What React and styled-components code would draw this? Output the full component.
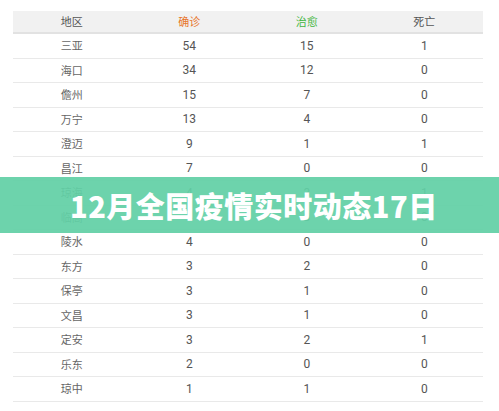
import React from "react";
import styled, { createGlobalStyle } from "styled-components";

const Global = createGlobalStyle`
  html, body { margin: 0; padding: 0; background: #fff; }
  body { font-family: "Noto Sans CJK SC", "Noto Sans", sans-serif; }
`;

const Page = styled.div`
  position: relative;
  width: 499px;
  height: 411px;
  overflow: hidden;
  padding: 11px 16px 0 13px;
  box-sizing: border-box;
`;

const Table = styled.div`
  width: 470px;
  display: flex;
  flex-direction: column;
`;

const HeadRow = styled.div`
  display: grid;
  grid-template-columns: repeat(4, 1fr);
  height: 21px;
  align-items: center;
  background: #f1f1f1;
  border-bottom: 2px solid #e2e2e2;
`;

const HeadCell = styled.div`
  text-align: center;
  font-size: 11px;
  color: ${(p) => p.$color || "#555"};
  line-height: 1;
`;

const Row = styled.div`
  display: grid;
  grid-template-columns: repeat(4, 1fr);
  height: 24.5px;
  align-items: center;
  border-bottom: 1px solid #e9e9e9;
  box-sizing: border-box;
`;

const NameCell = styled.div`
  text-align: center;
  font-size: 11px;
  color: #666;
  line-height: 1;
`;

const NumCell = styled.div`
  text-align: center;
  font-family: "Roboto", "Liberation Sans", sans-serif;
  font-size: 12px;
  color: #555;
  line-height: 1;
`;

const Banner = styled.div`
  position: absolute;
  left: 0;
  right: 0;
  top: 177px;
  height: 56px;
  background: rgba(98, 208, 166, 0.93);
  display: flex;
  align-items: center;
  padding-left: 70px;
  box-sizing: border-box;
`;

const Title = styled.h1`
  margin: 0;
  color: #fff;
  font-family: "Noto Sans CJK SC", sans-serif;
  font-weight: 900;
  font-size: 29px;
  letter-spacing: 0.5px;
  line-height: 1;
`;

const rows = [
  ["三亚", 54, 15, 1],
  ["海口", 34, 12, 0],
  ["儋州", 15, 7, 0],
  ["万宁", 13, 4, 0],
  ["澄迈", 9, 1, 1],
  ["昌江", 7, 0, 0],
  ["琼海", 4, 3, 1],
  ["临高", 4, 0, 0],
  ["陵水", 4, 0, 0],
  ["东方", 3, 2, 0],
  ["保亭", 3, 1, 0],
  ["文昌", 3, 1, 0],
  ["定安", 3, 2, 1],
  ["乐东", 2, 0, 0],
  ["琼中", 1, 1, 0],
];

export default function App() {
  return (
    <Page>
      <Global />
      <Table>
        <HeadRow>
          <HeadCell>地区</HeadCell>
          <HeadCell $color="#e8762c">确诊</HeadCell>
          <HeadCell $color="#3fb63f">治愈</HeadCell>
          <HeadCell>死亡</HeadCell>
        </HeadRow>
        {rows.map(([n, a, b, c]) => (
          <Row key={n}>
            <NameCell>{n}</NameCell>
            <NumCell>{a}</NumCell>
            <NumCell>{b}</NumCell>
            <NumCell>{c}</NumCell>
          </Row>
        ))}
      </Table>
      <Banner>
        <Title>12月全国疫情实时动态17日</Title>
      </Banner>
    </Page>
  );
}
